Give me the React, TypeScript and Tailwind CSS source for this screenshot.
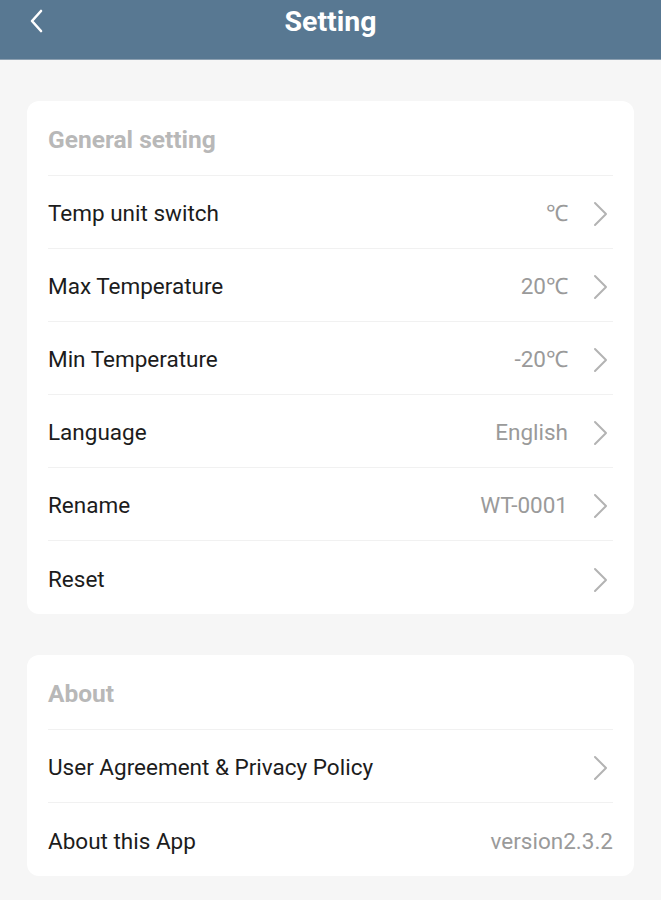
const general = [
  { label: 'Temp unit switch', value: '℃' },
  { label: 'Max Temperature', value: '20℃' },
  { label: 'Min Temperature', value: '-20℃' },
  { label: 'Language', value: 'English' },
  { label: 'Rename', value: 'WT-0001' },
  { label: 'Reset', value: '' },
];

function Chevron() {
  return (
    <svg width="15" height="26" viewBox="0 0 15 26" fill="none" className="mr-[5px] shrink-0">
      <polyline points="2,2 13,13 2,24" stroke="#b3b3b3" strokeWidth="2" strokeLinecap="round" strokeLinejoin="round" />
    </svg>
  );
}

function Row({ label, value, arrow = true, last = false }: { label: string; value?: string; arrow?: boolean; last?: boolean }) {
  return (
    <div className={`flex h-[73px] items-center justify-between pt-[4px] ${last ? '' : 'border-b border-[#f1f1f1]'}`}>
      <span className="text-[22.5px] text-[#1c1c1c]">{label}</span>
      <div className="flex items-center gap-[25px]">
        {value ? <span className="text-[22.5px] text-[#9a9a9a]">{value}</span> : null}
        {arrow ? <Chevron /> : null}
      </div>
    </div>
  );
}

function Card({ title, children }: { title: string; children: React.ReactNode }) {
  return (
    <div className="rounded-[12px] bg-white px-[21px]">
      <div className="flex h-[75px] items-center border-b border-[#f1f1f1] pt-[4px]">
        <span className="text-[24.5px] font-bold text-[#b8b8b8]">{title}</span>
      </div>
      {children}
    </div>
  );
}

export default function App() {
  return (
    <div className="min-h-[900px] bg-[#f6f6f6] font-['Roboto',sans-serif]">
      <header className="relative flex h-[60px] items-center justify-center bg-[#587892] border-b border-[#8da0b1]">
        <button className="absolute left-[28px] top-[9px]">
          <svg width="16" height="24" viewBox="0 0 16 24" fill="none">
            <polyline points="13,2 4,12 13,22" stroke="#ffffff" strokeWidth="2.6" strokeLinecap="round" strokeLinejoin="round" />
          </svg>
        </button>
        <h1 className="-mt-[14px] text-[28.5px] font-bold text-white">Setting</h1>
      </header>

      <main className="flex flex-col gap-[41px] px-[27px] pt-[41px]">
        <Card title="General setting">
          {general.map((item, i) => (
            <Row key={item.label} label={item.label} value={item.value} last={i === general.length - 1} />
          ))}
        </Card>
        <Card title="About">
          <Row label="User Agreement & Privacy Policy" />
          <Row label="About this App" value="version2.3.2" arrow={false} last />
        </Card>
      </main>
    </div>
  );
}
